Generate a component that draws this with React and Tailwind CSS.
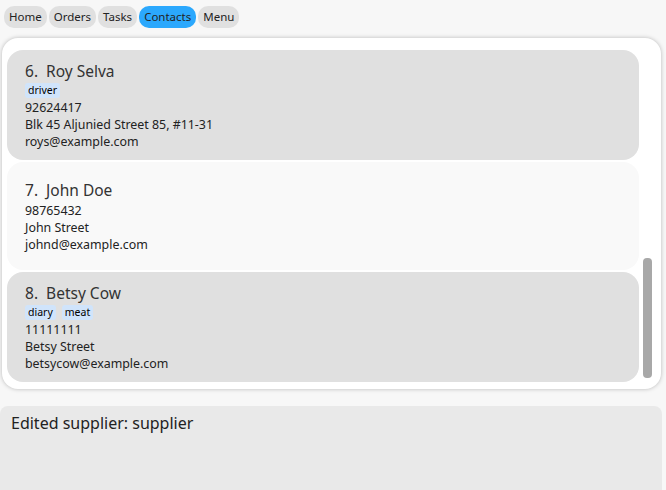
import React from "react";

const tabs = ["Home", "Orders", "Tasks", "Contacts", "Menu"];

const contacts = [
  { n: 6, name: "Roy Selva", tags: ["driver"], phone: "92624417", addr: "Blk 45 Aljunied Street 85, #11-31", email: "roys@example.com", bg: "bg-[#e0e0e0]", h: "h-[110px]" },
  { n: 7, name: "John Doe", tags: [], phone: "98765432", addr: "John Street", email: "johnd@example.com", bg: "bg-[#f9f9f9]", h: "h-[108px]" },
  { n: 8, name: "Betsy Cow", tags: ["diary", "meat"], phone: "11111111", addr: "Betsy Street", email: "betsycow@example.com", bg: "bg-[#e0e0e0]", h: "h-[110px]" },
];

export default function App() {
  return (
    <div className="w-[666px] h-[490px] bg-[#f7f7f7] flex flex-col overflow-hidden text-[#222]" style={{ fontFamily: '"Noto Sans", "Open Sans", sans-serif' }}>
      <div className="flex gap-[2px] px-[4px] pt-[6px] h-[38px]">
        {tabs.map((t) => (
          <div key={t} className={`h-[22px] px-[5px] rounded-[10px] flex items-center text-[11.5px] ${t === "Contacts" ? "bg-[#2ba8fd]" : "bg-[#e0e0e0]"}`}>{t}</div>
        ))}
      </div>
      <div className="mx-[2px] w-[659px] h-[351px] bg-white rounded-[16px] shadow-[0_0_4px_rgba(0,0,0,0.25)] flex pl-[5px] pt-[12px] pb-[7px] pr-[9px] gap-[4px]">
        <div className="flex-1 flex flex-col gap-[2px] overflow-hidden">
          {contacts.map((c) => (
            <div key={c.n} className={`${c.bg} ${c.h} rounded-[16px] shrink-0 pl-[18px] flex flex-col justify-center`}>
              <div className="text-[15.5px] leading-[22px] text-[#333]">{c.n}.&nbsp; {c.name}</div>
              {c.tags.length > 0 && (
                <div className="flex gap-[6px] mt-[1px]">
                  {c.tags.map((g) => (
                    <span key={g} className="bg-[#d0e4fb] rounded-[3px] px-[3px] text-[10.5px] leading-[15px] text-black">{g}</span>
                  ))}
                </div>
              )}
              <div className="text-[12.4px] leading-[17px] mt-[1px]">{c.phone}</div>
              <div className="text-[12.4px] leading-[17px]">{c.addr}</div>
              <div className="text-[12.4px] leading-[17px]">{c.email}</div>
            </div>
          ))}
        </div>
        <div className="w-[9px] flex flex-col justify-end pb-[4px]">
          <div className="h-[120px] bg-[#a8a8a8] rounded-[4px]"></div>
        </div>
      </div>
      <div className="mt-[17px] w-[662px] flex-1 bg-[#e9e9e9] rounded-t-[8px] px-[11px] pt-[5px] text-[16px] text-[#222]">
        Edited supplier: supplier
      </div>
    </div>
  );
}
